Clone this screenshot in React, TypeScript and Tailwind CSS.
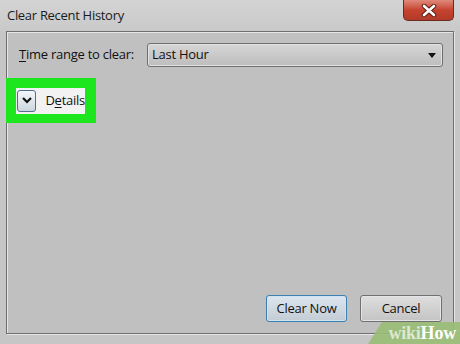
import React from "react";

export default function App() {
  const font = { fontFamily: '"Open Sans", "Noto Sans", sans-serif' };
  return (
    <div
      className="relative w-[460px] h-[344px] overflow-hidden bg-[#c6c6c6] text-[#111]"
      style={font}
    >
      {/* title bar */}
      <div className="h-[31px] flex items-start bg-gradient-to-b from-[#d4d4d4] to-[#c9c9c9]">
        <div className="pl-[7px] pt-[5px] text-[13px] leading-[20px] tracking-[-0.3px] text-[#1a1a1a]">
          Clear Recent History
        </div>
        <div className="ml-auto mr-[6px] w-[51px] h-[21px] rounded-b-[5px] border border-t-0 border-[#6b2a22] bg-gradient-to-b from-[#e0897c] via-[#c5432f] to-[#b23a28] flex items-center justify-center">
          <svg width="16" height="13" viewBox="0 0 16 13">
            <path d="M3 2 L13 11 M13 2 L3 11" stroke="#5a1d14" strokeWidth="4.5" strokeLinecap="round" />
            <path d="M3 2 L13 11 M13 2 L3 11" stroke="#ffffff" strokeWidth="2.6" strokeLinecap="round" />
          </svg>
        </div>
      </div>

      {/* panel */}
      <div className="ml-[6px] mr-[6px] h-[303px] border border-[#6e6e6e] shadow-[inset_1px_1px_0_#e6e6e6,1px_1px_0_#e6e6e6] bg-[#c0c0c0] flex flex-col">
        <div className="flex items-center pt-[11px] pl-[12px] pr-[10px]">
          <div className="w-[128px] text-[13px] tracking-[-0.25px]">
            <span className="underline underline-offset-2">T</span>ime range to clear:
          </div>
          <div className="flex-1 h-[24px] rounded-[3px] border border-[#6f6f6f] bg-gradient-to-b from-[#d6d6d6] to-[#bdbdbd] shadow-[inset_0_0_0_1px_#e2e2e2] flex items-center pl-[4px] pr-[6px]">
            <span className="text-[13px] tracking-[-0.25px]">Last Hour</span>
            <svg className="ml-auto" width="8" height="5" viewBox="0 0 8 5">
              <path d="M0 0 L8 0 L4 5 Z" fill="#111" />
            </svg>
          </div>
        </div>

        <div className="mt-[11px] w-[90px] h-[45px] bg-[#1ee61e] flex items-center -ml-[1px]">
          <div className="ml-[10px] w-[69px] h-[26px] bg-[#f2f2f2] flex items-center">
            <div className="ml-[1px] w-[20px] h-[22px] rounded-[3px] border border-[#4f6f8f] bg-gradient-to-b from-[#f4f8fc] to-[#cdd6de] flex items-center justify-center">
              <svg width="10" height="7" viewBox="0 0 10 7">
                <path d="M1 1 L5 5 L9 1" stroke="#111" strokeWidth="2.2" fill="none" />
              </svg>
            </div>
            <span className="ml-[9px] text-[13px] tracking-[-0.25px]">
              D<span className="underline underline-offset-2">e</span>tails
            </span>
          </div>
        </div>

        <div className="mt-auto mb-[11px] flex justify-end gap-[13px] pr-[11px]">
          <div className="w-[81px] h-[27px] rounded-[3px] border border-[#3c7fb1] bg-gradient-to-b from-[#dde6ee] to-[#c3ccd4] shadow-[inset_0_0_0_1px_#cfe4f2] flex items-center justify-center text-[13px] tracking-[-0.25px]">
            Clear Now
          </div>
          <div className="w-[82px] h-[27px] rounded-[3px] border border-[#707070] bg-gradient-to-b from-[#dedede] to-[#c4c4c4] shadow-[inset_0_0_0_1px_#e4e4e4] flex items-center justify-center text-[13px] tracking-[-0.25px]">
            Cancel
          </div>
        </div>
      </div>

      {/* wikiHow watermark */}
      <div
        className="absolute right-0 bottom-0 w-[92px] h-[22px] bg-[#98bd74]/90 flex items-center justify-end pr-[4px]"
        style={{ clipPath: "polygon(14px 0, 100% 0, 100% 100%, 0 100%)" }}
      >
        <span
          className="text-[18px] font-bold leading-none tracking-[-0.2px]"
          style={{ fontFamily: '"Liberation Serif", "DejaVu Serif", serif' }}
        >
          <span className="text-[#dde8d2]">wiki</span>
          <span className="text-white">How</span>
        </span>
      </div>
    </div>
  );
}
